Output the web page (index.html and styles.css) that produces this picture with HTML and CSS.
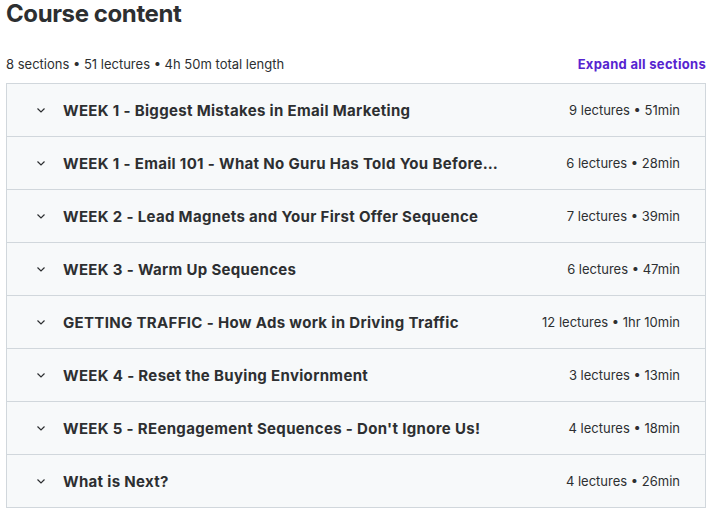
FILE: index.html
```html
<!DOCTYPE html>
<html>
<head>
<meta charset="utf-8">
<link rel="stylesheet" href="styles.css">
</head>
<body>
<div class="wrap">
  <h2 class="title">Course content</h2>
  <div class="meta">
    <span class="stats">8 sections • 51 lectures • 4h 50m total length</span>
    <button class="expand">Expand all sections</button>
  </div>
  <div class="sections">
    <div class="row"><svg class="chev" viewBox="0 0 16 16"><polyline points="4.5,6.5 8,10 11.5,6.5"/></svg><span class="name">WEEK 1 - Biggest Mistakes in Email Marketing</span><span class="info">9 lectures • 51min</span></div>
    <div class="row"><svg class="chev" viewBox="0 0 16 16"><polyline points="4.5,6.5 8,10 11.5,6.5"/></svg><span class="name">WEEK 1 - Email 101 - What No Guru Has Told You Before About Email Marketing</span><span class="info">6 lectures • 28min</span></div>
    <div class="row"><svg class="chev" viewBox="0 0 16 16"><polyline points="4.5,6.5 8,10 11.5,6.5"/></svg><span class="name">WEEK 2 - Lead Magnets and Your First Offer Sequence</span><span class="info">7 lectures • 39min</span></div>
    <div class="row"><svg class="chev" viewBox="0 0 16 16"><polyline points="4.5,6.5 8,10 11.5,6.5"/></svg><span class="name">WEEK 3 - Warm Up Sequences</span><span class="info">6 lectures • 47min</span></div>
    <div class="row"><svg class="chev" viewBox="0 0 16 16"><polyline points="4.5,6.5 8,10 11.5,6.5"/></svg><span class="name">GETTING TRAFFIC - How Ads work in Driving Traffic</span><span class="info">12 lectures • 1hr 10min</span></div>
    <div class="row"><svg class="chev" viewBox="0 0 16 16"><polyline points="4.5,6.5 8,10 11.5,6.5"/></svg><span class="name">WEEK 4 - Reset the Buying Enviornment</span><span class="info">3 lectures • 13min</span></div>
    <div class="row"><svg class="chev" viewBox="0 0 16 16"><polyline points="4.5,6.5 8,10 11.5,6.5"/></svg><span class="name">WEEK 5 - REengagement Sequences - Don't Ignore Us!</span><span class="info">4 lectures • 18min</span></div>
    <div class="row"><svg class="chev" viewBox="0 0 16 16"><polyline points="4.5,6.5 8,10 11.5,6.5"/></svg><span class="name">What is Next?</span><span class="info">4 lectures • 26min</span></div>
  </div>
</div>
</body>
</html>
```
FILE: styles.css
```css
* { box-sizing: border-box; }
body {
  margin: 0;
  background: #ffffff;
  font-family: Inter, "Noto Sans", sans-serif;
  color: #2d2f31;
}
.wrap {
  width: 700px;
  margin-left: 6px;
}
.title {
  margin: 0;
  font-size: 24px;
  line-height: 28px;
  font-weight: 700;
  letter-spacing: -0.4px;
  color: #2d2f31;
}
.meta {
  display: flex;
  justify-content: space-between;
  align-items: center;
  margin-top: 26px;
  margin-bottom: 9px;
  height: 20px;
}
.stats {
  font-size: 13px;
  color: #2d2f31;
}
.expand {
  border: 0;
  background: none;
  padding: 0;
  font-family: inherit;
  font-size: 13px;
  font-weight: 700;
  letter-spacing: 0.3px;
  color: #5624d0;
}
.sections {
  border: 1px solid #d1d7dc;
  border-bottom: 0;
}
.row {
  display: flex;
  align-items: center;
  height: 53px;
  padding: 0 25px 0 26px;
  background: #f7f9fa;
  border-bottom: 1px solid #d1d7dc;
}
.chev {
  width: 16px;
  height: 16px;
  flex: none;
  margin-right: 14px;
}
.chev polyline {
  fill: none;
  stroke: #2d2f31;
  stroke-width: 1.2;
}
.name {
  flex: 1;
  min-width: 0;
  white-space: nowrap;
  overflow: hidden;
  text-overflow: ellipsis;
  font-size: 15px;
  font-weight: 700;
  letter-spacing: 0.33px;
  color: #2d2f31;
}
.info {
  flex: none;
  margin-left: 66px;
  font-size: 13px;
  color: #2d2f31;
}
```
